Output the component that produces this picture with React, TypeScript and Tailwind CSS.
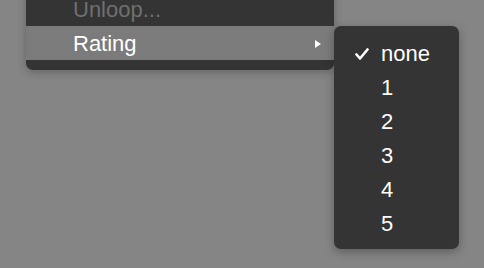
import React from 'react';

const RATINGS = ['none', '1', '2', '3', '4', '5'];

function Check() {
  return (
    <svg viewBox="0 0 14 12" className="w-[14px] h-[12px]">
      <path d="M1.5 6.5 L5 10.5 L12.5 1.5" fill="none" stroke="white" strokeWidth="2.6" strokeLinecap="round" strokeLinejoin="round" />
    </svg>
  );
}

export default function App() {
  return (
    <div className="relative w-[484px] h-[268px] overflow-hidden bg-[#858585] font-['Liberation_Sans',Arial,sans-serif] text-[22px] text-white">
      {/* Main context menu (cut off at the top) */}
      <div className="absolute left-[26px] top-[-8px] w-[308px] pb-[10px] bg-[#343434] rounded-b-[7px] shadow-[0_2px_8px_rgba(0,0,0,0.25)]">
        <div className="h-[34px] pt-[2px] leading-[32px] pl-[47px] text-[#6f6f6f]">Unloop...</div>
        <div className="h-[34px] pt-[2px] leading-[32px] pl-[47px] pr-[13px] bg-[#7b7b7b] flex items-center justify-between">
          <span>Rating</span>
          <svg viewBox="0 0 6 8" className="w-[6px] h-[8px]">
            <path d="M0 0 L6 4 L0 8 Z" fill="white" />
          </svg>
        </div>
      </div>

      {/* Rating submenu */}
      <div className="absolute left-[334px] top-[26px] w-[125px] pt-[10px] pb-[9px] bg-[#343434] rounded-[7px] shadow-[0_3px_10px_rgba(0,0,0,0.3)]">
        {RATINGS.map((r, i) => (
          <div key={r} className="h-[34px] pt-[2px] leading-[32px] flex items-center">
            <div className="w-[47px] flex justify-end pr-[12px]">
              {i === 0 && <Check />}
            </div>
            <span>{r}</span>
          </div>
        ))}
      </div>
    </div>
  );
}
